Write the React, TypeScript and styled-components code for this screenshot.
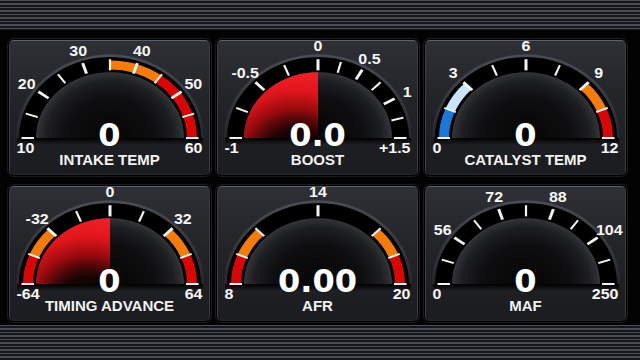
import React from 'react';
import styled, { createGlobalStyle } from 'styled-components';

const Global = createGlobalStyle`
  html, body { margin: 0; padding: 0; background: #000; }
  body { width: 640px; height: 360px; overflow: hidden; font-family: "Liberation Sans", Arial, sans-serif; }
`;

const Screen = styled.div`
  width: 640px;
  height: 360px;
  display: flex;
  flex-direction: column;
  background: #000;
`;

const Stripes = styled.div<{ $h: number }>`
  flex: none;
  height: ${(p) => p.$h}px;
  background: repeating-linear-gradient(
    to bottom,
    #4a4d56 0px,
    #4a4d56 1.5px,
    #16171b 1.5px,
    #16171b 3.5px
  );
`;

const Board = styled.main`
  flex: 1;
  display: grid;
  grid-template-columns: repeat(3, 201px);
  grid-template-rows: repeat(2, 135px);
  column-gap: 7px;
  row-gap: 11px;
  padding: 10px 0 0 9px;
  background: #030303;
`;

const Card = styled.section`
  display: grid;
  grid-template-areas: 'stack';
  border-radius: 5px;
  border: 1px solid;
  border-color: #5d6069 #393b41 #26272b #3d3f45;
  background: linear-gradient(to bottom, #2e3035 0%, #232428 45%, #1b1c1f 100%);
  box-shadow: 0 0 0 1px #000, 0 0 0 2px #1a1b1e;
`;

const Dial = styled.svg`
  grid-area: stack;
  display: block;
  overflow: visible;
`;

const Readout = styled.div`
  grid-area: stack;
  display: flex;
  flex-direction: column;
  align-items: center;
  justify-content: flex-end;
  padding-bottom: 7px;
  color: #fff;
`;

const Value = styled.div`
  font-family: "DejaVu Sans", Verdana, sans-serif;
  font-weight: bold;
  font-size: 32px;
  line-height: 32px;
  margin-bottom: 1px;
`;

const Title = styled.div`
  font-family: "Liberation Sans", Arial, sans-serif;
  font-weight: bold;
  font-size: 15px;
  line-height: 15px;
  color: #f2f2f2;
`;

type Band = [number, number, string];
type Label = [number, string];
interface Spec {
  title: string;
  value: string;
  ticks: number[];
  labels: Label[];
  bands: Band[];
  fill?: boolean;
}

const even = (n: number) => Array.from({ length: n + 1 }, (_, i) => 180 - (i * 180) / n);

const ORANGE = '#f57c0a';
const RED = '#d90606';
const BLUE = '#1c78d6';
const ICE = '#c9e4fb';

const specs: Spec[] = [
  {
    title: 'INTAKE TEMP',
    value: '0',
    ticks: even(10),
    labels: [[180, '10'], [144, '20'], [108, '30'], [72, '40'], [36, '50'], [0, '60']],
    bands: [[90, 54, ORANGE], [54, 0, RED]],
  },
  {
    title: 'BOOST',
    value: '0.0',
    ticks: [180, 157.5, 135, 112.5, 90, 75, 60, 45, 30, 15, 0],
    labels: [[180, '-1'], [135, '-0.5'], [90, '0'], [60, '0.5'], [30, '1'], [0, '+1.5']],
    bands: [],
    fill: true,
  },
  {
    title: 'CATALYST TEMP',
    value: '0',
    ticks: even(8),
    labels: [[180, '0'], [135, '3'], [90, '6'], [45, '9'], [0, '12']],
    bands: [[180, 157.5, BLUE], [157.5, 135, ICE], [45, 22.5, ORANGE], [22.5, 0, RED]],
  },
  {
    title: 'TIMING ADVANCE',
    value: '0',
    ticks: even(8),
    labels: [[180, '-64'], [135, '-32'], [90, '0'], [45, '32'], [0, '64']],
    bands: [[180, 157.5, RED], [157.5, 135, ORANGE], [45, 22.5, ORANGE], [22.5, 0, RED]],
    fill: true,
  },
  {
    title: 'AFR',
    value: '0.00',
    ticks: [180, 157.5, 135, 90, 45, 22.5, 0],
    labels: [[180, '8'], [90, '14'], [0, '20']],
    bands: [[180, 157.5, RED], [157.5, 135, ORANGE], [45, 22.5, ORANGE], [22.5, 0, RED]],
  },
  {
    title: 'MAF',
    value: '0',
    ticks: even(10),
    labels: [[180, '0'], [144, '56'], [108, '72'], [72, '88'], [36, '104'], [0, '250']],
    bands: [],
  },
];

const W = 199;
const H = 133;
const CX = 100;
const CY = 97;
const K = 0.89;

const rad = (a: number) => (a * Math.PI) / 180;
const pt = (r: number, a: number) => [r * Math.cos(rad(a)), -r * Math.sin(rad(a))];
const arc = (r: number, a1: number, a2: number) => {
  const [x1, y1] = pt(r, a1);
  const [x2, y2] = pt(r, a2);
  return `M${x1} ${y1}A${r} ${r} 0 0 1 ${x2} ${y2}`;
};
const half = (r: number) => `M${-r} 0A${r} ${r} 0 0 1 ${r} 0Z`;
const wedge = (r: number, a1: number, a2: number) => {
  const [x1, y1] = pt(r, a1);
  const [x2, y2] = pt(r, a2);
  return `M0 0L${x1} ${y1}A${r} ${r} 0 0 1 ${x2} ${y2}Z`;
};

function Gauge({ spec, idx }: { spec: Spec; idx: number }) {
  const id = (s: string) => `g${idx}-${s}`;
  const labelled = new Set(spec.labels.map((l) => l[0]));
  return (
    <Dial width={W} height={H} viewBox={`0 0 ${W} ${H}`}>
      <defs>
        <linearGradient id={id('ring')} x1="0" y1="-94" x2="0" y2="0" gradientUnits="userSpaceOnUse">
          <stop offset="0" stopColor="#4a4d55" />
          <stop offset="1" stopColor="#24262a" />
        </linearGradient>
        <radialGradient id={id('dome')} cx="0" cy="0" r="74" gradientUnits="userSpaceOnUse">
          <stop offset="0" stopColor="#050505" />
          <stop offset="0.6" stopColor="#0e0e10" />
          <stop offset="0.86" stopColor="#1d1e21" />
          <stop offset="0.97" stopColor="#2e2f33" />
          <stop offset="1" stopColor="#38393e" />
        </radialGradient>
        <radialGradient id={id('fill')} cx="-22" cy="22" r="100" gradientUnits="userSpaceOnUse">
          <stop offset="0" stopColor="#000" stopOpacity="0" />
          <stop offset="0.3" stopColor="#200000" stopOpacity="0.7" />
          <stop offset="0.55" stopColor="#9a0a0e" />
          <stop offset="0.75" stopColor="#e0161c" />
          <stop offset="1" stopColor="#f22228" />
        </radialGradient>
        <linearGradient id={id('shade')} x1="0" y1="0" x2="0" y2="7" gradientUnits="userSpaceOnUse">
          <stop offset="0" stopColor="#000" />
          <stop offset="1" stopColor="#000" stopOpacity="0" />
        </linearGradient>
      </defs>
      <g transform={`translate(${CX} ${CY})`}>
        <rect x={-93} y={0} width={186} height={7} fill={`url(#${id('shade')})`} />
        <g transform={`scale(1 ${K})`}>
          <path d={half(94)} fill={`url(#${id('ring')})`} />
          <path d={half(91)} fill="#000" />
          {spec.bands.map(([a1, a2, c], i) => (
            <path key={i} d={arc(82, a1, a2)} stroke={c} strokeWidth={10} fill="none" />
          ))}
          <path d={half(74)} fill={`url(#${id('dome')})`} />
          {spec.fill && <path d={wedge(74, 180, 90)} fill={`url(#${id('fill')})`} />}
          {spec.ticks.map((a) => {
            const [x1, y1] = pt(76, a);
            const [x2, y2] = pt(88.5, a);
            return (
              <line
                key={a}
                x1={x1}
                y1={y1}
                x2={x2}
                y2={y2}
                stroke="#f4f4f4"
                strokeWidth={labelled.has(a) && a !== 0 && a !== 180 ? 3 : 2.2}
              />
            );
          })}
          {spec.labels.map(([a, t]) => {
            if (a === 180 || a === 0) {
              return (
                <text
                  key={t}
                  x={a === 180 ? -93.5 : 92.5}
                  y={17.2}
                  textAnchor={a === 180 ? 'start' : 'end'}
                  fill="#f6f6f6"
                  fontFamily='"Liberation Sans", Arial, sans-serif'
                  fontWeight="bold"
                  fontSize={16}
                >
                  {t}
                </text>
              );
            }
            const [x, y] = pt(103, a);
            return (
              <text
                key={t}
                x={x}
                y={y + 5.7}
                textAnchor="middle"
                fill="#f6f6f6"
                fontFamily='"Liberation Sans", Arial, sans-serif'
                fontWeight="bold"
                fontSize={16}
              >
                {t}
              </text>
            );
          })}
        </g>
      </g>
    </Dial>
  );
}

export default function App() {
  return (
    <>
      <Global />
      <Screen>
        <Stripes $h={30} />
        <Board>
          {specs.map((s, i) => (
            <Card key={s.title}>
              <Gauge spec={s} idx={i} />
              <Readout>
                <Value>{s.value}</Value>
                <Title>{s.title}</Title>
              </Readout>
            </Card>
          ))}
        </Board>
        <Stripes $h={35} />
      </Screen>
    </>
  );
}
